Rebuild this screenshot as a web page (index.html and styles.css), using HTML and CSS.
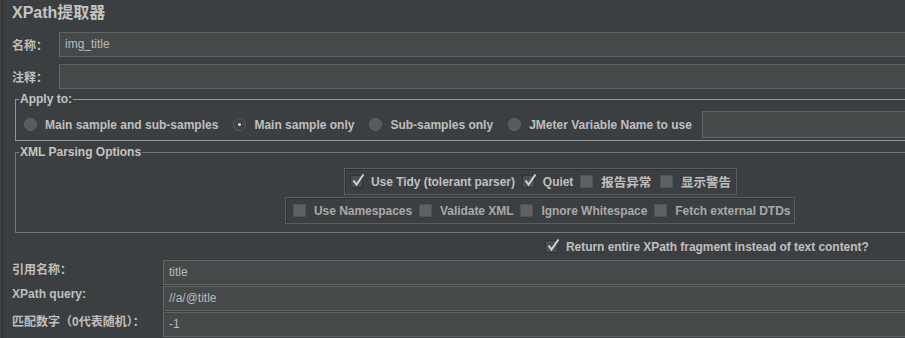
FILE: index.html
```html
<!DOCTYPE html>
<html lang="zh">
<head>
<meta charset="utf-8">
<title>XPath提取器</title>
<link rel="stylesheet" href="styles.css">
</head>
<body>
<div class="app">
  <h1 class="title">XPath提取器</h1>

  <div class="row">
    <label class="lbl">名称：</label>
    <div class="field">img_title</div>
  </div>
  <div class="row row2">
    <label class="lbl">注释：</label>
    <div class="field"></div>
  </div>

  <fieldset class="group apply">
    <legend>Apply to:</legend>
    <div class="apply-inner">
      <span class="opt"><span class="radio"></span>Main sample and sub-samples</span>
      <span class="opt"><span class="radio on"></span>Main sample only</span>
      <span class="opt"><span class="radio"></span>Sub-samples only</span>
      <span class="opt"><span class="radio"></span>JMeter Variable Name to use</span>
      <div class="field var"></div>
    </div>
  </fieldset>

  <fieldset class="group xml">
    <legend>XML Parsing Options</legend>
    <div class="xml-inner">
      <div class="box b1">
        <span class="cb-item"><span class="cb on"><svg viewBox="0 0 14 14"><path d="M2.5 7.5 L5.5 11.5 L12.5 1.5"/></svg></span>Use Tidy (tolerant parser)</span>
        <span class="cb-item"><span class="cb on"><svg viewBox="0 0 14 14"><path d="M2.5 7.5 L5.5 11.5 L12.5 1.5"/></svg></span>Quiet</span>
        <span class="cb-item cjk"><span class="cb"></span>报告异常</span>
        <span class="cb-item cjk"><span class="cb"></span>显示警告</span>
      </div>
      <div class="box b2">
        <span class="cb-item"><span class="cb"></span>Use Namespaces</span>
        <span class="cb-item"><span class="cb"></span>Validate XML</span>
        <span class="cb-item"><span class="cb"></span>Ignore Whitespace</span>
        <span class="cb-item"><span class="cb"></span>Fetch external DTDs</span>
      </div>
    </div>
  </fieldset>

  <div class="return">
    <span class="cb-item"><span class="cb on"><svg viewBox="0 0 14 14"><path d="M2.5 7.5 L5.5 11.5 L12.5 1.5"/></svg></span>Return entire XPath fragment instead of text content?</span>
  </div>

  <div class="grid">
    <label class="glbl">引用名称：</label>
    <div class="field">title</div>
    <label class="glbl">XPath query:</label>
    <div class="field">//a/@title</div>
    <label class="glbl">匹配数字（0代表随机）：</label>
    <div class="field">-1</div>
  </div>
</div>
</body>
</html>
```

FILE: styles.css
```css
html, body {
  margin: 0;
  padding: 0;
  background: #3c3f41;
}
body {
  width: 905px;
  height: 338px;
  overflow: hidden;
  font-family: "Liberation Sans", "Noto Sans CJK SC", sans-serif;
  font-size: 12px;
  font-weight: bold;
  color: #bfbfbf;
}
.app {
  width: 920px;
  height: 338px;
  margin-left: 2px;
  border-left: 1px solid #2f3133;
  padding-left: 9px;
  box-sizing: border-box;
}
.title {
  margin: 0;
  height: 26px;
  line-height: 25px;
  font-size: 16px;
  font-weight: bold;
  color: #c4c4c4;
}
.row {
  display: flex;
  align-items: center;
  margin-top: 6px;
  height: 25px;
}
.row2 { margin-top: 7px; }
.lbl {
  width: 47px;
  flex: none;
}
.field {
  flex: 1;
  height: 25px;
  box-sizing: border-box;
  background: #45494a;
  border: 1px solid #646464;
  font-weight: normal;
  color: #bbbbbb;
  line-height: 23px;
  padding-left: 5px;
}

.group {
  margin: 0;
  padding: 0;
  border: 1px solid #94979a;
  margin-left: 3px;
  min-width: 0;
}
.group legend {
  font-size: 12px;
  line-height: 14px;
  padding: 0 1px;
  margin-left: 3px;
  color: #c4c4c4;
}
.apply { margin-top: 3px; }
.apply-inner {
  display: flex;
  align-items: center;
  padding: 5px 0 2px 8px;
}
.opt {
  display: flex;
  align-items: center;
  margin-right: 15px;
  white-space: nowrap;
}
.opt:nth-child(4) { margin-right: 0; }
.radio {
  width: 13px;
  height: 13px;
  border-radius: 50%;
  box-sizing: border-box;
  background: #585b5d;
  border: 1px solid #626567;
  margin-right: 8px;
  flex: none;
}
.radio.on {
  background: #3e4143;
  border: 1px solid #5a5d5f;
  position: relative;
}
.radio.on::after {
  content: "";
  position: absolute;
  left: 4px;
  top: 4px;
  width: 3px;
  height: 3px;
  border-radius: 50%;
  background: #d8d8d8;
}
.field.var {
  height: 27px;
  margin-left: 10px;
}

.xml { margin-top: 4px; border-color: #75787a; }
.xml-inner {
  padding: 9px 0 8px 0;
}
.box {
  display: flex;
  align-items: center;
  width: max-content;
  height: 27px;
  box-sizing: border-box;
  border: 1px solid #5a5d5f;
  box-shadow: inset 1px 1px 0 #2e3032;
}
.b1 {
  margin-left: 328px;
  padding: 0 5px 0 5px;
}
.b2 {
  margin-left: 269px;
  margin-top: 2px;
  padding: 0 4px 0 7px;
  color: #a8a8a8;
}
.cb-item {
  display: flex;
  align-items: center;
  white-space: nowrap;
  margin-right: 7px;
  letter-spacing: -0.05px;
}
.cb-item.cjk {
  font-size: 12.5px;
  margin-right: 9px;
}
.cb-item:last-child { margin-right: 0; }
.cb {
  width: 13px;
  height: 13px;
  box-sizing: border-box;
  background: #5d6163;
  border: 1px solid #515456;
  margin-right: 8px;
  flex: none;
  position: relative;
}
.cb.on {
  background: #4a4e50;
  border-color: #2f3234;
}
.cb svg {
  position: absolute;
  left: 0;
  top: -3px;
  width: 14px;
  height: 14px;
  fill: none;
  stroke: #d2d2d2;
  stroke-width: 2;
}

.return {
  height: 27px;
  display: flex;
  align-items: center;
  padding-left: 533px;
}

.grid {
  display: grid;
  grid-template-columns: 151px 1fr;
  grid-auto-rows: 25px;
  row-gap: 1px;
}
.glbl {
  padding-top: 3px;
  line-height: 14px;
  white-space: nowrap;
}
.grid .glbl:nth-of-type(2) { padding-top: 1px; }
.grid .field {
  height: 25px;
}
```
